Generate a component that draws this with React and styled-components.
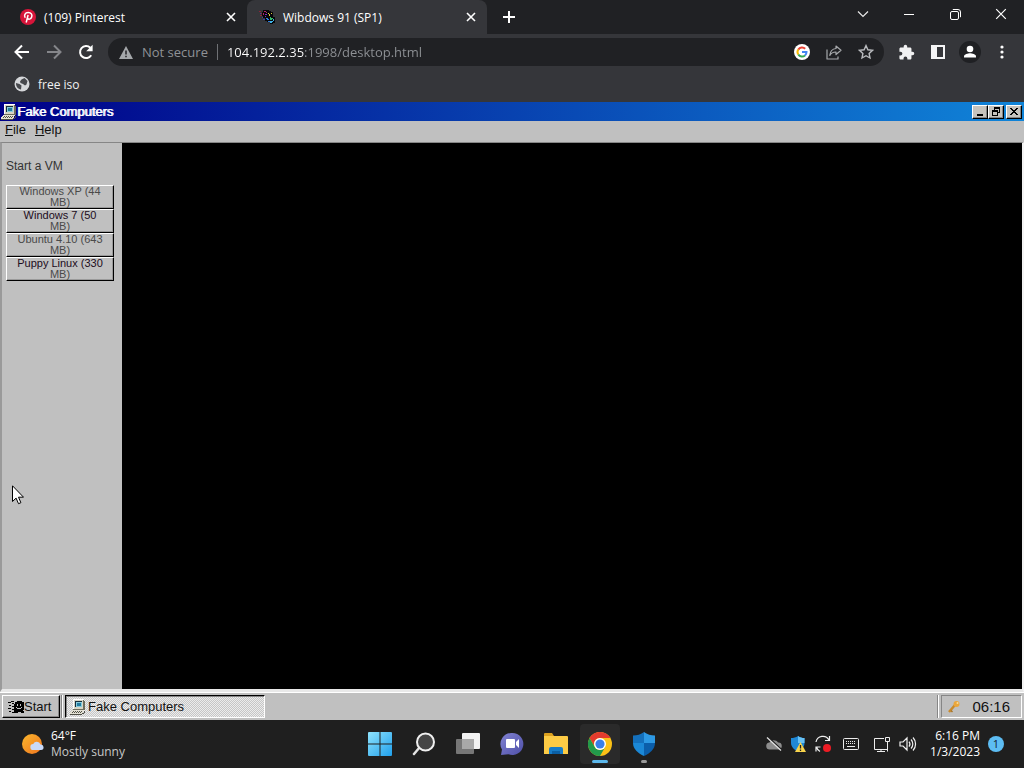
import React, { useState } from "react";
import styled, { createGlobalStyle } from "styled-components";

const machines = [
  { id: "xp", name: "Windows XP (44 MB)", color: "#4a4a4a" },
  { id: "win7", name: "Windows 7 (50 MB)", color: "#1c0c1c" },
  { id: "ubuntu", name: "Ubuntu 4.10 (643 MB)", color: "#4a4a4a" },
  { id: "puppy", name: "Puppy Linux (330 MB)", color: "#1c0c1c" },
];

const dockItems = [
  { id: "start", label: "Start", icon: WindowsIcon },
  { id: "search", label: "Search", icon: SearchIcon },
  { id: "tasks", label: "Task view", icon: TaskViewIcon },
  { id: "chat", label: "Chat", icon: ChatIcon },
  { id: "files", label: "File Explorer", icon: FolderIcon },
  { id: "chrome", label: "Google Chrome", icon: ChromeIcon, active: true },
  { id: "security", label: "Windows Security", icon: ShieldIcon, open: true },
];

export default function App() {
  const [url, setUrl] = useState("104.192.2.35:1998/desktop.html");

  return (
    <Screen>
      <GlobalStyle />
      <TabStrip>
        <Tab>
          <PinterestIcon />
          <span>(109) Pinterest</span>
          <TabButton aria-label="Close tab"><CloseIcon size={10} width={1.6} /></TabButton>
        </Tab>
        <Tab $active>
          <FlagIcon />
          <span>Wibdows 91 (SP1)</span>
          <TabButton aria-label="Close tab"><CloseIcon size={10} width={1.6} /></TabButton>
        </Tab>
        <NewTab aria-label="New tab">
          <svg width="14" height="14" viewBox="0 0 14 14" stroke="#fff" strokeWidth="2">
            <path d="M7 1v12M1 7h12" />
          </svg>
        </NewTab>
        <WindowButtons>
          <button aria-label="Search tabs">
            <svg width="12" height="12" viewBox="0 0 12 12" fill="none" stroke="#e8e8e8" strokeWidth="1.2">
              <path d="M1 3.5l5 5 5-5" />
            </svg>
          </button>
          <button aria-label="Minimize">
            <svg width="10" height="10" viewBox="0 0 10 10" stroke="#fff"><path d="M0 5.5h10" /></svg>
          </button>
          <button aria-label="Restore">
            <svg width="11" height="11" viewBox="0 0 11 11" fill="none" stroke="#fff">
              <rect x="0.5" y="2.5" width="8" height="8" rx="1.5" />
              <path d="M2.8 0.5h5.2a2.5 2.5 0 0 1 2.5 2.5v5.2" />
            </svg>
          </button>
          <button aria-label="Close"><CloseIcon size={12} width={1} /></button>
        </WindowButtons>
      </TabStrip>

      <Toolbar>
        <ToolButton aria-label="Back"><ArrowIcon color="#fff" /></ToolButton>
        <ToolButton aria-label="Forward"><ArrowIcon color="#85868a" flip /></ToolButton>
        <ToolButton aria-label="Reload">
          <svg width="16" height="16" viewBox="0 0 16 16">
            <path d="M13.2 11.2A6 6 0 1 1 12.3 3.8" fill="none" stroke="#fff" strokeWidth="2" />
            <path d="M14.6 0.8v6.4H8.2z" fill="#fff" />
          </svg>
        </ToolButton>
        <AddressBar>
          <svg width="14" height="13" viewBox="0 0 14 13">
            <path d="M7 0L14 13H0z" fill="#a4a7aa" />
            <path d="M7 4.5v4M7 9.7v1.5" stroke="#202124" strokeWidth="1.5" />
          </svg>
          <Insecure>Not secure</Insecure>
          <UrlInput aria-label="Address" value={url} onChange={(e) => setUrl(e.target.value)} />
          <ToolButton aria-label="Search with Google"><GoogleIcon /></ToolButton>
          <ToolButton aria-label="Share">
            <svg width="16" height="15" viewBox="0 0 16 15" fill="none" stroke="#a6a8ab" strokeWidth="1.2" strokeLinejoin="round">
              <path d="M1 4.5v9.5h11v-2.5" />
              <path d="M10 1l5 4.3-5 4.2V7C7.2 6.9 5.2 8 3.8 10.4 4.2 6.3 6.4 3.9 10 3.5z" />
            </svg>
          </ToolButton>
          <ToolButton aria-label="Bookmark">
            <svg width="16" height="16" viewBox="0 0 16 16" fill="none" stroke="#b9bbbe" strokeWidth="1.4">
              <path d="M8 1.6l1.9 4.2 4.6.5-3.4 3.1.9 4.6L8 11.7 4 14l.9-4.6-3.4-3.1 4.6-.5z" />
            </svg>
          </ToolButton>
        </AddressBar>
        <ToolButton aria-label="Extensions">
          <svg width="17" height="17" viewBox="0 0 24 24" fill="#f1f1f2">
            <path d="M20.5 11H19V7c0-1.100-.9-2-2-2h-4V3.500a2.500 2.500 0 0 0-5 0V5H4c-1.100 0-2 .9-2 2v3.800h1.500a2.700 2.700 0 0 1 0 5.400H2V20c0 1.100.9 2 2 2h3.800v-1.500a2.700 2.700 0 0 1 5.400 0V22H17c1.100 0 2-.9 2-2v-4h1.500a2.500 2.500 0 0 0 0-5z" />
          </svg>
        </ToolButton>
        <ToolButton aria-label="Side panel">
          <svg width="14" height="14" viewBox="0 0 14 14">
            <path d="M0 0h14v14H0zM6 2v10h6V2z" fill="#f5f5f6" fillRule="evenodd" />
          </svg>
        </ToolButton>
        <ToolButton aria-label="Profile">
          <svg width="22" height="22" viewBox="0 0 22 22">
            <circle cx="11" cy="11" r="11" fill="#1f2023" />
            <circle cx="11" cy="8" r="3.3" fill="#fff" />
            <path d="M5 16.500v-1.300c0-2 4-3 6-3s6 1 6 3v1.300z" fill="#fff" />
          </svg>
        </ToolButton>
        <ToolButton aria-label="Menu">
          <svg width="4" height="14" viewBox="0 0 4 14" fill="#fff">
            <circle cx="2" cy="2" r="1.6" /><circle cx="2" cy="7" r="1.6" /><circle cx="2" cy="12" r="1.6" />
          </svg>
        </ToolButton>
      </Toolbar>

      <Bookmarks>
        <a href="#free-iso"><GlobeIcon />free iso</a>
      </Bookmarks>

      <ClassicTitle>
        <ComputerIcon />
        <h1>Fake Computers</h1>
        <ClassicButton aria-label="Minimize">
          <svg width="12" height="10" viewBox="0 0 12 10" shapeRendering="crispEdges"><path d="M3 7h6v2H3z" /></svg>
        </ClassicButton>
        <ClassicButton aria-label="Restore">
          <svg width="12" height="10" viewBox="0 0 12 10" shapeRendering="crispEdges">
            <path d="M4 0h6v6H8V5h1V2H5v1H4zM2 3h6v6H2zM3 5v3h4V5z" fillRule="evenodd" />
          </svg>
        </ClassicButton>
        <ClassicButton aria-label="Close" $apart>
          <svg width="12" height="10" viewBox="0 0 12 10" shapeRendering="crispEdges">
            <path d="M2 1h2v1h1v1h2V2h1V1h2v1H9v1H8v1H7v1h1v1h1v1h1v1H8V7H7V6H5v1H4v1H2V7h1V6h1V5h1V4H4V3H3V2H2z" />
          </svg>
        </ClassicButton>
      </ClassicTitle>
      <MenuBar>
        <button><u>F</u>ile</button>
        <button><u>H</u>elp</button>
      </MenuBar>

      <Workspace>
        <Sidebar>
          <p>Start a VM</p>
          {machines.map((vm) => (
            <VmButton key={vm.id} $color={vm.color}>{vm.name}</VmButton>
          ))}
        </Sidebar>
        <Monitor />
      </Workspace>

      <ClassicTaskbar>
        <StartButton><MonoFlag />Start</StartButton>
        <Divider />
        <TaskButton><ComputerIcon />Fake Computers</TaskButton>
        <Divider $push />
        <ClassicTray>
          <svg width="14" height="14" viewBox="0 0 14 14">
            <path d="M2 12L8 5" stroke="#c98a2b" strokeWidth="2.5" />
            <path d="M4 10.500l1.500 1.500" stroke="#a87426" strokeWidth="1.5" />
            <circle cx="9.5" cy="4" r="3" fill="#eba63a" />
            <circle cx="10.5" cy="3" r="1" fill="#f9dc9b" />
          </svg>
          <time>06:16</time>
        </ClassicTray>
      </ClassicTaskbar>

      <Dock>
        <Weather>
          <svg width="24" height="24" viewBox="0 0 24 24">
            <defs>
              <linearGradient id="sun" x1="0" y1="0" x2="1" y2="1">
                <stop offset="0" stopColor="#fbb72c" /><stop offset="1" stopColor="#ee7420" />
              </linearGradient>
            </defs>
            <circle cx="11" cy="12" r="10" fill="url(#sun)" />
            <path d="M12.500 18a3 3 0 0 1-.3-6 4 4 0 0 1 7.300.4 2.800 2.800 0 0 1 .5 5.600z" fill="#c9dafa" />
          </svg>
          <div>
            <b>64°F</b>
            <span>Mostly sunny</span>
          </div>
        </Weather>
        <DockIcons>
          {dockItems.map((item) => (
            <DockButton key={item.id} aria-label={item.label} $active={item.active} $open={item.open}>
              <item.icon />
            </DockButton>
          ))}
        </DockIcons>
        <SystemTray>
          <TrayIcons />
          <Clock>
            <time>6:16 PM</time>
            <time>1/3/2023</time>
          </Clock>
          <Badge aria-label="Notifications">1</Badge>
        </SystemTray>
      </Dock>

      <Cursor width="12" height="20" viewBox="0 0 12 20">
        <path d="M0.500 0.800v15.700l3.600-3.400 2.400 5.600 2.400-1-2.400-5.500h5z" fill="#fff" stroke="#000" />
      </Cursor>
    </Screen>
  );
}

function CloseIcon({ size, width }) {
  return (
    <svg width={size} height={size} viewBox="0 0 10 10" stroke="#fff" strokeWidth={width}>
      <path d="M1 1l8 8M9 1L1 9" />
    </svg>
  );
}

function ArrowIcon({ color, flip }) {
  return (
    <svg width="16" height="16" viewBox="0 0 16 16" fill="none" stroke={color} strokeWidth="2">
      <path d={flip ? "M1 8h13M8 1.500L14.500 8 8 14.500" : "M15 8H2M8 1.500L1.500 8 8 14.500"} />
    </svg>
  );
}

function PinterestIcon() {
  return (
    <svg width="16" height="16" viewBox="0 0 16 16">
      <circle cx="8" cy="8" r="8" fill="#d6153a" />
      <path d="M6.200 13.500L8.100 6M5.300 8.800C3.600 6.500 5 3.500 8.200 3.500c3 0 4.300 2.200 3.500 4.500-.8 2.400-3.400 2.800-4.100 1.300" fill="none" stroke="#fff" strokeWidth="1.5" />
    </svg>
  );
}

// four wavy panes with a pixel trail behind them
function FlagIcon() {
  return (
    <svg width="16" height="16" viewBox="0 0 16 16" shapeRendering="crispEdges">
      <path d="M4 1h6v1h2v1h2v5h2v6h-2v1h-3v-2H8v-1H6V9H4V7H3V3h1z" fill="#07070a" />
      <path d="M0 2h2v1H0zM2 4h1v1H2zM1 6h2v1H1z" fill="#8e2338" />
      <path d="M1 4h1v1H1zM3 8h1v1H3zM4 10h2v1H4z" fill="#3a3fa6" />
      <path d="M5 2h2v1H5zM4 4h1v2H4zM7 3h1v1H7z" fill="#b0246a" />
      <path d="M6 5h2v1H6zM6 7h1v1H6z" fill="#7a2bc0" />
      <path d="M9 4h1v1H9zM10 5h1v2h-1zM12 4h1v1h-1z" fill="#d9cc3c" />
      <path d="M7 9h2v1h1v1H8zM9 12h2v1H9z" fill="#2a7fe5" />
      <path d="M11 8h1v1h1v2h-2zM13 9h1v1h-1z" fill="#35bc69" />
      <path d="M11 12h3v1h-1v1h-2zM14 10h1v2h-1z" fill="#3fb4e8" />
    </svg>
  );
}

function MonoFlag() {
  return (
    <svg width="16" height="16" viewBox="0 0 16 16" shapeRendering="crispEdges">
      <path d="M7 3h2V2h5v1h2v8h-1v1h1v2h-3v-1h-3v1H7v-1H6V5h1z" />
      <path d="M0 3h3v1H0zM4 4h2v1H4zM1 6h2v1H1zM4 7h2v1H4zM0 9h3v1H0zM4 10h2v1H4zM1 12h2v1H1zM4 13h3v1H4zM3 2h3v1H3z" />
      <path d="M9 5h1v2H9zM12 5h1v2h-1zM8 8h1v1H8zM9 9h4v1H9zM13 8h1v1h-1z" fill="#c0c0c0" />
    </svg>
  );
}

function ComputerIcon() {
  return (
    <svg width="16" height="16" viewBox="0 0 16 16" shapeRendering="crispEdges">
      <path d="M3 0h11v10H3z" fill="#fff" />
      <path d="M4 1h10v1h1v9H3v-1h1z" fill="#6d6d5d" />
      <path d="M4 1h9v9H4z" fill="#d7d4c4" />
      <path d="M5 2h7v6H5z" fill="#132c3c" />
      <path d="M6 3h6v5H6z" fill="#87cbdc" />
      <path d="M7 4h4v3H7z" fill="#247ca0" />
      <path d="M2 11h12v1h-1v2h-1v1H0v-2h1v-1h1z" fill="#e4e1d4" />
      <path d="M3 12h1v1H3zM5 12h1v1H5zM7 12h1v1H7zM9 12h1v1H9zM11 12h1v1h-1zM2 13h1v1H2zM4 13h1v1H4zM6 13h1v1H6zM8 13h1v1H8zM10 13h1v1h-1zM0 15h12v1H0zM12 14h2v1h-2zM14 12h1v2h-1z" fill="#4f4f45" />
    </svg>
  );
}

function GoogleIcon() {
  return (
    <svg width="16" height="16" viewBox="0 0 16 16">
      <circle cx="8" cy="8" r="8" fill="#fff" />
      <g fill="none" strokeWidth="2">
        <path d="M4.300 5.600A4.500 4.500 0 0 1 11.200 4.800" stroke="#ea4335" />
        <path d="M4.300 10.500A4.500 4.500 0 0 1 4.300 5.500" stroke="#fbbc05" />
        <path d="M11 11.400a4.500 4.500 0 0 1-6.700-.9" stroke="#34a853" />
        <path d="M8 8h4.500a4.500 4.500 0 0 1-1.500 3.400" stroke="#4285f4" />
      </g>
    </svg>
  );
}

function GlobeIcon() {
  return (
    <svg width="16" height="16" viewBox="0 0 16 16">
      <circle cx="8" cy="8" r="7.5" fill="#d5d7da" />
      <path d="M2 7l3.500 1 2 1.500L7 13.500C4 13 1.800 10.500 2 7zM7.500 3.500L10.500 2l3 3-1 3.500-1.500 1-2-1.500L6.500 7 6 5.500z" fill="#47494d" />
    </svg>
  );
}

function WindowsIcon() {
  return (
    <svg width="24" height="24" viewBox="0 0 24 24">
      <defs>
        <linearGradient id="win" x1="0" y1="0" x2="1" y2="1">
          <stop offset="0" stopColor="#8fe3fd" /><stop offset="1" stopColor="#20a0ec" />
        </linearGradient>
      </defs>
      <path d="M1 0h10.500v11.500H0V1a1 1 0 0 1 1-1zM12.500 0H23a1 1 0 0 1 1 1v10.500H12.500zM0 12.500h11.500V24H1a1 1 0 0 1-1-1zM12.500 12.500H24V23a1 1 0 0 1-1 1H12.500z" fill="url(#win)" />
    </svg>
  );
}

function SearchIcon() {
  return (
    <svg width="24" height="24" viewBox="0 0 24 24">
      <path d="M7.500 15.500L2 22" stroke="#e4e4e4" strokeWidth="2.5" strokeLinecap="round" />
      <circle cx="13.5" cy="10" r="8.5" fill="#454545" stroke="#f0f0f0" strokeWidth="2" />
    </svg>
  );
}

function TaskViewIcon() {
  return (
    <svg width="26" height="24" viewBox="0 0 26 24">
      <rect x="7" y="1" width="18" height="16" rx="1" fill="#f2f2f2" />
      <rect x="1" y="7" width="18" height="15" rx="1" fill="#777" />
      <path d="M7 7h12v10H7z" fill="#a9a9a9" />
    </svg>
  );
}

function ChatIcon() {
  return (
    <svg width="24" height="24" viewBox="0 0 24 24">
      <defs>
        <linearGradient id="chat" x1="0" y1="0" x2="1" y2="1">
          <stop offset="0" stopColor="#8182d2" /><stop offset="1" stopColor="#4f50a8" />
        </linearGradient>
      </defs>
      <path d="M12.500 1a11 11 0 1 1-4 21.300L1 23l1-5.500A11 11 0 0 1 12.500 1z" fill="url(#chat)" />
      <rect x="6" y="7" width="9" height="9" rx="1" fill="#fff" />
      <path d="M16 10l3-3v9l-3-3z" fill="#fff" />
    </svg>
  );
}

function FolderIcon() {
  return (
    <svg width="26" height="24" viewBox="0 0 26 24">
      <path d="M1 2a1 1 0 0 1 1-1h7l2 3H1z" fill="#dca11f" />
      <path d="M1 4h23a1 1 0 0 1 1 1v17H1z" fill="#fccb45" />
      <path d="M6 22v-5a2 2 0 0 1 2-2h10a2 2 0 0 1 2 2v5z" fill="#167cc8" />
      <path d="M9 19h8v3H9z" fill="#0b5fa4" />
    </svg>
  );
}

function ChromeIcon() {
  return (
    <svg width="24" height="24" viewBox="0 0 24 24">
      <circle cx="12" cy="12" r="12" fill="#fbc116" />
      <path d="M1.600 6A12 12 0 0 1 22.400 6H12a6 6 0 0 0-5.200 9z" fill="#e33b2e" />
      <path d="M1.600 6a12 12 0 0 0 10.400 18l5.200-9a6 6 0 0 1-10.400 0z" fill="#229a4b" />
      <circle cx="12" cy="12" r="6" fill="#fff" />
      <circle cx="12" cy="12" r="4.6" fill="#397fe8" />
    </svg>
  );
}

function ShieldIcon() {
  return (
    <svg width="24" height="24" viewBox="0 0 24 24">
      <path d="M12 0c3 2.500 7 3.500 11 3.500V11H12z" fill="#2d99e4" />
      <path d="M12 0C9 2.500 5 3.500 1 3.500V11h11z" fill="#1470bc" />
      <path d="M1 11c0 6 5 10.500 11 13V11z" fill="#1b88d6" />
      <path d="M23 11c0 6-5 10.500-11 13V11z" fill="#0b5eaa" />
    </svg>
  );
}

function TrayIcons() {
  return (
    <>
      <svg width="16" height="16" viewBox="0 0 16 16">
        <path d="M4 13.500a3.500 3.500 0 0 1-.5-7A5 5 0 0 1 12 6.500 3.300 3.300 0 0 1 12.500 13.500z" fill="#8d8d8d" />
        <path d="M2 1l14 13" stroke="#1f1f1f" strokeWidth="1.5" />
        <path d="M1 1.500l14 13" stroke="#e4e4e4" strokeWidth="1.2" />
      </svg>
      <svg width="16" height="16" viewBox="0 0 16 16">
        <path d="M8 0c2 1.500 4 2 6.500 2v5c0 4-3 7-6.500 9C4.500 14 1 11 1 7V2c2.500 0 5-.5 7-2z" fill="#1f88d6" />
        <path d="M8 0c2 1.500 4 2 6.500 2v5H8z" fill="#68c2f5" />
        <path d="M10.500 6L16 16H5z" fill="#f9d44b" />
        <path d="M10.500 9v3.500M10.500 13.500V15" stroke="#222" strokeWidth="1.3" />
      </svg>
      <svg width="18" height="18" viewBox="0 0 18 18" fill="none" stroke="#f0f0f0" strokeWidth="1.2">
        <path d="M2 7a7 7 0 0 1 13-2M15.500 1v4.500H11M6 16.500A7 7 0 0 1 2.500 12M2 16.500V12h4.500" />
        <circle cx="13" cy="13" r="4" fill="#ed1c24" stroke="none" />
      </svg>
      <svg width="16" height="12" viewBox="0 0 16 12" fill="none" stroke="#ececec">
        <rect x="0.5" y="0.5" width="15" height="11" rx="1" />
        <path d="M3 3.500h10M3 5.500h10" strokeDasharray="1 1" />
        <path d="M4 8.500h8" />
      </svg>
      <svg width="18" height="17" viewBox="0 0 18 17" fill="none" stroke="#ededed">
        <path d="M11 2.500H1.500v11h13M8 13.500v2M4 15.500h8" />
        <path d="M12.500 1.500h4v4h-4zM14.500 5.500v10" />
      </svg>
      <svg width="18" height="16" viewBox="0 0 18 16" fill="none" stroke="#f0f0f0" strokeWidth="1.2">
        <path d="M1 6h3l4-4v12l-4-4H1zM10 5.500a4 4 0 0 1 0 5M12 3.500a6.500 6.500 0 0 1 0 9M14 1.500a9.500 9.500 0 0 1 0 13" />
      </svg>
    </>
  );
}

const GlobalStyle = createGlobalStyle`
  * {
    box-sizing: border-box;
  }
  body {
    margin: 0;
    overflow: hidden;
  }
  button, input {
    font: inherit;
    color: inherit;
    padding: 0;
    border: 0;
    background: none;
  }
  svg {
    flex: none;
    display: block;
  }
`;

const Screen = styled.div`
  position: relative;
  display: flex;
  flex-direction: column;
  min-height: 100vh;
  font-family: "Open Sans", sans-serif;
  font-size: 12px;
  background: #35363a;
  color: #fff;
`;

const TabStrip = styled.header`
  display: flex;
  height: 34px;
  background: #202124;
`;

const Tab = styled.div`
  display: flex;
  align-items: center;
  gap: 8px;
  width: ${({ $active }) => ($active ? "240px" : "247px")};
  padding: 0 8px 0 ${({ $active }) => ($active ? "12px" : "20px")};
  border-radius: 8px 8px 0 0;
  background: ${({ $active }) => ($active ? "#35363a" : "transparent")};
  span {
    flex: 1;
    white-space: nowrap;
  }
`;

const TabButton = styled.button`
  display: grid;
  place-items: center;
  width: 16px;
  height: 16px;
`;

const NewTab = styled.button`
  display: grid;
  place-items: center;
  width: 44px;
`;

const WindowButtons = styled.div`
  display: flex;
  height: 28px;
  margin-left: auto;
  button {
    display: grid;
    place-items: center;
    width: 46px;
  }
`;

const Toolbar = styled.nav`
  display: flex;
  align-items: center;
  height: 36px;
  padding: 0 6px;
`;

const ToolButton = styled.button`
  flex: none;
  display: grid;
  place-items: center;
  width: 32px;
  height: 28px;
`;

const AddressBar = styled.div`
  flex: 1;
  display: flex;
  align-items: center;
  height: 28px;
  margin: 0 6px;
  padding: 0 2px 0 11px;
  border-radius: 14px;
  background: #202124;
  font-size: 13px;
`;

const Insecure = styled.span`
  margin-left: 9px;
  padding-right: 9px;
  line-height: 16px;
  border-right: 1px solid #6f7175;
  color: #8f9296;
  white-space: nowrap;
`;

/* host part is bright, port and path are dimmed */
const UrlInput = styled.input`
  flex: 1;
  min-width: 0;
  height: 28px;
  margin-left: 9px;
  outline: none;
  color: transparent;
  caret-color: #fff;
  background: linear-gradient(to right, #fff 77px, #8f9296 77px);
  background-clip: text;
  -webkit-background-clip: text;
`;

const Bookmarks = styled.nav`
  display: flex;
  align-items: center;
  height: 32px;
  padding: 0 14px 4px;
  a {
    display: flex;
    align-items: center;
    gap: 8px;
    color: #f1f1f1;
    text-decoration: none;
  }
`;

const ClassicTitle = styled.header`
  display: flex;
  align-items: center;
  height: 19px;
  padding: 0 2px 0 1px;
  background: linear-gradient(to right, #000088, #1084d8);
  font-family: "Liberation Sans", Arial, sans-serif;
  h1 {
    flex: 1;
    margin: 0;
    font-size: 13px;
    font-weight: 400;
    text-shadow: 1px 0 #fff;
  }
`;

const ClassicButton = styled.button`
  display: grid;
  place-items: center;
  width: 16px;
  height: 14px;
  margin-left: ${({ $apart }) => ($apart ? "2px" : "0")};
  background: #c6c3bd;
  border: 1px solid;
  border-color: #fff #000 #000 #fff;
  box-shadow: inset -1px -1px #868686;
`;

const MenuBar = styled.nav`
  display: flex;
  align-items: flex-start;
  gap: 9px;
  height: 21px;
  padding: 0 5px;
  background: #c0c0c0;
  color: #111;
  font: 13px/17px "Liberation Sans", Arial, sans-serif;
`;

const Workspace = styled.main`
  flex: 1;
  display: flex;
  border: 2px solid;
  border-width: 1px 2px 3px;
  border-color: #868686 #f4f4f4 #e8e8e8 #9a9a9a;
`;

const Sidebar = styled.aside`
  width: 120px;
  padding: 15px 8px 0 4px;
  background: #c0c0c0;
  font-family: "Liberation Sans", Arial, sans-serif;
  p {
    margin: 0 0 11px;
    font-size: 12px;
    line-height: 16px;
    color: #333;
  }
`;

const VmButton = styled.button`
  display: block;
  width: 100%;
  height: 24px;
  padding: 0 10px 2px;
  border: 1px solid;
  border-color: #fff #000 #000 #fff;
  box-shadow: inset -1px -1px #9a9a9a;
  font-size: 11px;
  line-height: 11px;
  color: #4a4a4a;
  &::first-line {
    color: ${({ $color }) => $color};
  }
`;

const Monitor = styled.section`
  flex: 1;
  background: #000;
`;

const ClassicTaskbar = styled.footer`
  display: flex;
  align-items: center;
  height: 28px;
  padding: 0 2px;
  border-top: 1px solid #fff;
  background: #c0c0c0;
  color: #111;
  font: 13px/16px "Liberation Sans", Arial, sans-serif;
`;

const StartButton = styled.button`
  display: flex;
  align-items: center;
  width: 58px;
  height: 23px;
  padding-left: 5px;
  border: 1px solid;
  border-color: #fff #000 #000 #fff;
  box-shadow: inset -1px -1px #868686;
`;

const Divider = styled.div`
  width: 2px;
  height: 23px;
  margin: 0 2px 0 ${({ $push }) => ($push ? "auto" : "1px")};
  border-left: 1px solid #868686;
  border-right: 1px solid #fff;
`;

const TaskButton = styled.button`
  display: flex;
  align-items: center;
  gap: 2px;
  width: 200px;
  height: 23px;
  padding-left: 4px;
  border: 1px solid;
  border-color: #000 #fff #fff #000;
  box-shadow: inset 1px 1px #868686;
  background: repeating-conic-gradient(#c6c6c6 0 25%, #ececec 0 50%) 0 0 / 2px 2px;
`;

const ClassicTray = styled.div`
  display: flex;
  align-items: center;
  justify-content: space-between;
  width: 81px;
  height: 23px;
  padding: 0 11px 0 5px;
  border: 1px solid;
  border-color: #868686 #fff #fff #868686;
  font-size: 15px;
`;

const Dock = styled.footer`
  display: grid;
  grid-template-columns: 1fr auto 1fr;
  align-items: center;
  height: 48px;
  background: #1f1f1f;
  line-height: 16px;
`;

const Weather = styled.div`
  display: flex;
  align-items: center;
  gap: 6px;
  padding-left: 21px;
  b, span {
    display: block;
    font-weight: 400;
  }
  span {
    color: #c8c8c8;
  }
`;

const DockIcons = styled.div`
  display: flex;
  gap: 4px;
`;

const DockButton = styled.button`
  position: relative;
  display: grid;
  place-items: center;
  width: 40px;
  height: 40px;
  border-radius: 4px;
  background: ${({ $active }) => ($active ? "#2a2a2a" : "transparent")};
  &::after {
    content: "";
    display: ${({ $active, $open }) => ($active || $open ? "block" : "none")};
    position: absolute;
    bottom: 1px;
    width: ${({ $active }) => ($active ? "16px" : "6px")};
    height: 3px;
    border-radius: 2px;
    background: ${({ $active }) => ($active ? "#5cb8ec" : "#9a9a9a")};
  }
`;

const SystemTray = styled.div`
  display: flex;
  align-items: center;
  justify-content: flex-end;
  gap: 8px;
  padding-right: 20px;
  > svg:nth-of-type(4) {
    margin: 0 6px 0 3px;
  }
`;

const Clock = styled.div`
  display: flex;
  flex-direction: column;
  align-items: flex-end;
  margin-left: 5px;
`;

const Badge = styled.button`
  width: 16px;
  height: 16px;
  border-radius: 50%;
  background: #5dbdf3;
  color: #123;
  font-size: 11px;
`;

const Cursor = styled.svg`
  position: absolute;
  left: 12px;
  top: 485px;
  pointer-events: none;
`;
